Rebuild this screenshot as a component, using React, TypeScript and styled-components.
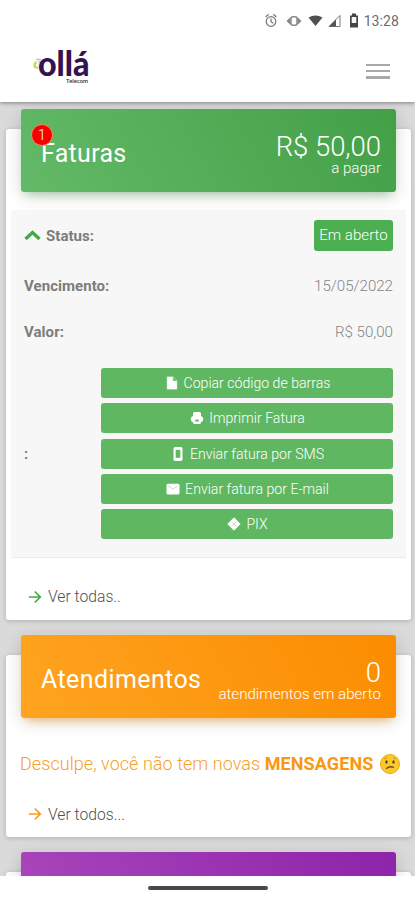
import React from "react";
import styled, { createGlobalStyle } from "styled-components";

const GlobalStyle = createGlobalStyle`
  * { box-sizing: border-box; }
  body { margin: 0; background: #fff; font-family: Roboto, "Liberation Sans", sans-serif; }
`;

const Screen = styled.div`
  width: 415px;
  height: 900px;
  display: flex;
  flex-direction: column;
  overflow: hidden;
  background: #fff;
`;

const StatusBar = styled.div`
  height: 46px;
  flex: none;
  display: flex;
  justify-content: flex-end;
  padding: 12px 16px 0 0;
  background: #fff;
  z-index: 2;
`;

const StatusIcons = styled.svg`
  width: 96px;
  height: 18px;
  display: block;
`;

const Clock = styled.span`
  margin-left: 3px;
  font-size: 14px;
  line-height: 19px;
  letter-spacing: 0.1px;
  color: #6c6c6c;
`;

const Header = styled.header`
  height: 56px;
  flex: none;
  display: flex;
  justify-content: space-between;
  align-items: flex-start;
  padding: 0 25px 0 30px;
  background: #fff;
  box-shadow: 0 1px 4px rgba(0, 0, 0, 0.42);
  z-index: 1;
`;

const Logo = styled.svg`
  width: 64px;
  height: 44px;
  overflow: visible;
`;

const Burger = styled.div`
  display: flex;
  flex-direction: column;
  gap: 4px;
  width: 24px;
  margin-top: 18px;
`;

const BurgerLine = styled.span`
  height: 2.2px;
  background: #a8a8a8;
`;

const Content = styled.main`
  flex: 1;
  min-height: 0;
  overflow: hidden;
  background: #dadada;
  padding: 27px 4px 0 6px;
`;

const Card = styled.section<{ $height: number }>`
  height: ${(p) => p.$height}px;
  margin-bottom: 35px;
  background: #fff;
  border-radius: 3px;
  box-shadow: 0 1px 5px rgba(0, 0, 0, 0.2);
  display: flow-root;
`;

const Banner = styled.div<{ $from: string; $to: string; $glow: string }>`
  position: relative;
  height: 83.5px;
  margin: -20.4px 15px 0;
  padding: 0 15px 0 20px;
  display: flex;
  justify-content: space-between;
  border-radius: 3px;
  color: #fff;
  background: linear-gradient(60deg, ${(p) => p.$from}, ${(p) => p.$to});
  box-shadow: 0 4px 18px rgba(0, 0, 0, 0.13), 0 6px 10px -5px ${(p) => p.$glow};
`;

const BannerTitle = styled.h2<{ $spacing?: number }>`
  margin: 29px 0 0;
  font-size: 25px;
  line-height: 32px;
  font-weight: 400;
  letter-spacing: ${(p) => p.$spacing ?? 0}px;
`;

const Summary = styled.div`
  display: flex;
  flex-direction: column;
  align-items: flex-end;
  padding-top: 24px;
`;

const Amount = styled.span`
  font-size: 27.5px;
  line-height: 27px;
  font-weight: 300;
  letter-spacing: -0.05px;
`;

const Caption = styled.span`
  font-size: 15.1px;
  line-height: 16px;
  font-weight: 300;
`;

const Badge = styled.span`
  position: absolute;
  left: 10px;
  top: 15px;
  width: 22px;
  height: 22px;
  border: 1px solid #ef8d5b;
  border-radius: 50%;
  background: #f80000;
  font-size: 14px;
  line-height: 20px;
  font-weight: 300;
  text-align: center;
`;

const Details = styled.div`
  height: 348px;
  margin: 17.4px 5px 0;
  padding: 0 13px;
  background: #f7f7f7;
  border-bottom: 1px solid #ececec;
`;

const Row = styled.div<{ $height: number }>`
  height: ${(p) => p.$height}px;
  display: flex;
  align-items: center;
  justify-content: space-between;
`;

const Label = styled.span`
  display: flex;
  align-items: center;
  font-size: 15px;
  font-weight: 700;
  color: #7c7c7c;
  letter-spacing: 0.05px;
`;

const Chevron = styled.svg`
  width: 17px;
  height: 12px;
  margin-right: 5px;
`;

const Value = styled.span`
  font-size: 15.1px;
  font-weight: 300;
  color: #858585;
`;

const StatusTag = styled.span`
  width: 79px;
  height: 31px;
  border-radius: 3px;
  background: #4caf50;
  color: #fff;
  font-size: 15.1px;
  font-weight: 300;
  line-height: 31px;
  text-align: center;
`;

const Actions = styled.div`
  width: 292px;
  display: flex;
  flex-direction: column;
  gap: 5.4px;
`;

const ActionButton = styled.button`
  height: 30px;
  display: flex;
  align-items: center;
  justify-content: center;
  gap: 4px;
  padding: 0;
  border: 0;
  border-radius: 3px;
  background: #5fb762;
  color: #fff;
  font: 300 14.1px Roboto, sans-serif;
`;

const ActionIcon = styled.svg`
  width: 16px;
  height: 16px;
`;

const MoreLink = styled.a<{ $top: number }>`
  display: flex;
  align-items: center;
  gap: 6px;
  height: 20px;
  margin: ${(p) => p.$top}px 0 0 22px;
  color: #505050;
  font-size: 15.7px;
  font-weight: 300;
`;

const Arrow = styled.svg`
  width: 14px;
  height: 14px;
`;

const Notice = styled.p`
  display: flex;
  align-items: center;
  margin: 33px 0 0 14px;
  height: 25px;
  font-size: 18px;
  font-weight: 300;
  color: #f6a02c;
  white-space: pre;
  letter-spacing: 0.05px;
`;

const Strong = styled.strong`
  font-weight: 700;
  color: #fb9710;
  letter-spacing: 0.12px;
`;

const Face = styled.svg`
  width: 20px;
  height: 20px;
  margin-left: 6px;
`;

const NavBar = styled.div`
  height: 24px;
  flex: none;
  display: flex;
  justify-content: center;
  padding-top: 10px;
  background: #fff;
  z-index: 1;
`;

const NavPill = styled.div`
  width: 120px;
  height: 3.6px;
  border-radius: 2px;
  background: #484848;
`;

const green = "#5fb762";

const actions = [
  {
    text: "Copiar código de barras",
    icon: <path d="M2.800 1.500h6.400L13.200 5.500v9H2.800zM9.200 2v3.700h3.700" fill="#fff" stroke={green} strokeWidth=".3" />,
  },
  {
    text: "Imprimir Fatura",
    icon: (
      <>
        <path d="M4 6V3.500Q4 2 5.500 2h5Q12 2 12 3.500V6q2.300.5 2.300 3.200 0 2.500-2.200 3l-.8 1.800H4.700L3.900 12.200Q1.700 11.700 1.700 9.200 1.700 6.500 4 6z" fill="#fff" />
        <path d="M5.800 11.500h4.400L9.300 9.500H6.700z" fill={green} />
      </>
    ),
  },
  {
    text: "Enviar fatura por SMS",
    icon: (
      <>
        <rect x="3.500" y="1" width="9" height="14" rx="1.800" fill="#fff" />
        <rect x="5.700" y="3.800" width="4.600" height="8" fill={green} />
      </>
    ),
  },
  {
    text: "Enviar fatura por E-mail",
    icon: (
      <>
        <rect x="1.500" y="2.800" width="13" height="10.700" rx="1.500" fill="#fff" />
        <path d="M3 5l5 3 5-3" fill="none" stroke="#b8dfb9" strokeWidth=".8" />
      </>
    ),
  },
  {
    text: "PIX",
    icon: (
      <>
        <path d="M8 1.800L14.200 8 8 14.200 1.800 8z" fill="#fff" stroke="#fff" strokeLinejoin="round" />
        <path d="M5.500 5.800L8 8l2.500-2.200M5.500 10.200L8 8l2.500 2.200" fill="none" stroke="#b4dbb5" strokeWidth=".8" />
      </>
    ),
  },
];

const ArrowIcon = ({ color }: { color: string }) => (
  <Arrow viewBox="0 0 14 14" fill="none" stroke={color} strokeWidth="1.700">
    <path d="M.8 7H12M6.800 1.500L12.300 7l-5.500 5.500" />
  </Arrow>
);

const LogoMark = () => (
  <Logo viewBox="0 0 64 44">
    <text x="8" y="30.300" textLength="51.500" lengthAdjust="spacingAndGlyphs" fontFamily="Lato, sans-serif" fontWeight="900" fontSize="34.500" fill="#351250">ollá</text>
    <path d="M6.500 16q-3 2-1.500 5l3 1" fill="none" stroke="#c2d95b" strokeWidth="2.200" />
    <path d="M6 13.500h5M8 16h2" stroke="#c3b9c8" strokeWidth="1.300" />
    <text x="36" y="37.200" textLength="22" lengthAdjust="spacingAndGlyphs" fontFamily="Roboto, sans-serif" fontWeight="500" fontSize="5" fill="#383044">Telecom</text>
  </Logo>
);

export default function App() {
  return (
    <>
      <GlobalStyle />
      <Screen>
        <StatusBar>
          <StatusIcons viewBox="0 0 96 18" fill="none">
            <g stroke="#777" strokeWidth="1.200">
              <circle cx="6" cy="9.500" r="4.800" />
              <path d="M.6 5l3-2.700M11.400 5l-3-2.700M6 6.500v3.200l2.300 1.500" />
            </g>
            <path d="M21.500 9l4-4v8zM36.500 9l-4-4v8z" fill="#888" />
            <rect x="26" y="4.800" width="6" height="8.500" rx="2" fill="#fff" stroke="#888" strokeWidth="1.500" />
            <path d="M43.500 5.500q7-4 14 0l-7 8.500z" fill="#505050" />
            <path d="M64 14.500L75 3.500v11z" fill="#fff" stroke="#777" />
            <path d="M64 14.500l7-7v7z" fill="#555" />
            <path d="M87 3.500v-2h4v2h2v12h-8v-12z" fill="#444" />
            <path d="M86.700 5h4.600v6h-4.600z" fill="#f4f4f4" />
          </StatusIcons>
          <Clock>13:28</Clock>
        </StatusBar>
        <Header>
          <LogoMark />
          <Burger>
            <BurgerLine />
            <BurgerLine />
            <BurgerLine />
          </Burger>
        </Header>
        <Content>
          <Card $height={491}>
            <Banner $from="#63b967" $to="#43a047" $glow="rgba(76,175,80,.5)">
              <BannerTitle $spacing={0.3}>Faturas</BannerTitle>
              <Badge>1</Badge>
              <Summary>
                <Amount>R$ 50,00</Amount>
                <Caption>a pagar</Caption>
              </Summary>
            </Banner>
            <Details>
              <Row $height={52}>
                <Label>
                  <Chevron viewBox="0 0 17 12">
                    <path d="M1.500 9l7-6.500 7 6.500" fill="none" stroke="#43a84a" strokeWidth="3.200" />
                  </Chevron>
                  Status:
                </Label>
                <StatusTag>Em aberto</StatusTag>
              </Row>
              <Row $height={48}>
                <Label>Vencimento:</Label>
                <Value>15/05/2022</Value>
              </Row>
              <Row $height={45}>
                <Label>Valor:</Label>
                <Value>R$ 50,00</Value>
              </Row>
              <Row $height={198}>
                <Label>:</Label>
                <Actions>
                  {actions.map((a) => (
                    <ActionButton key={a.text}>
                      <ActionIcon viewBox="0 0 16 16">{a.icon}</ActionIcon>
                      {a.text}
                    </ActionButton>
                  ))}
                </Actions>
              </Row>
            </Details>
            <MoreLink $top={29}>
              <ArrowIcon color="#43aa49" />
              Ver todas..
            </MoreLink>
          </Card>
          <Card $height={182}>
            <Banner $from="#ffa421" $to="#fb8c00" $glow="rgba(255,152,0,.6)">
              <BannerTitle $spacing={0.4}>Atendimentos</BannerTitle>
              <Summary>
                <Amount>0</Amount>
                <Caption>atendimentos em aberto</Caption>
              </Summary>
            </Banner>
            <Notice>
              {"Desculpe, você não tem novas "}
              <Strong>MENSAGENS</Strong>
              <Face viewBox="0 0 20 20">
                <circle cx="10" cy="10" r="9.500" fill="#fbc928" stroke="#e7a91c" />
                <ellipse cx="6.500" cy="8" rx="1.200" ry="1.700" fill="#514122" />
                <ellipse cx="13.500" cy="8" rx="1.200" ry="1.700" fill="#514122" />
                <path d="M6 14.800q3.500-3.300 8-1.300" fill="none" stroke="#65502a" strokeWidth="1.300" />
                <path d="M4.300 5l2.400-1.200M15.700 5l-2.400-1.200" fill="none" stroke="#a27b20" strokeWidth=".8" />
              </Face>
            </Notice>
            <MoreLink $top={28}>
              <ArrowIcon color="#fb9b10" />
              Ver todos...
            </MoreLink>
          </Card>
          <Card $height={182}>
            <Banner $from="#ab47bc" $to="#8e24aa" $glow="rgba(156,39,176,.5)" />
          </Card>
        </Content>
        <NavBar>
          <NavPill />
        </NavBar>
      </Screen>
    </>
  );
}
